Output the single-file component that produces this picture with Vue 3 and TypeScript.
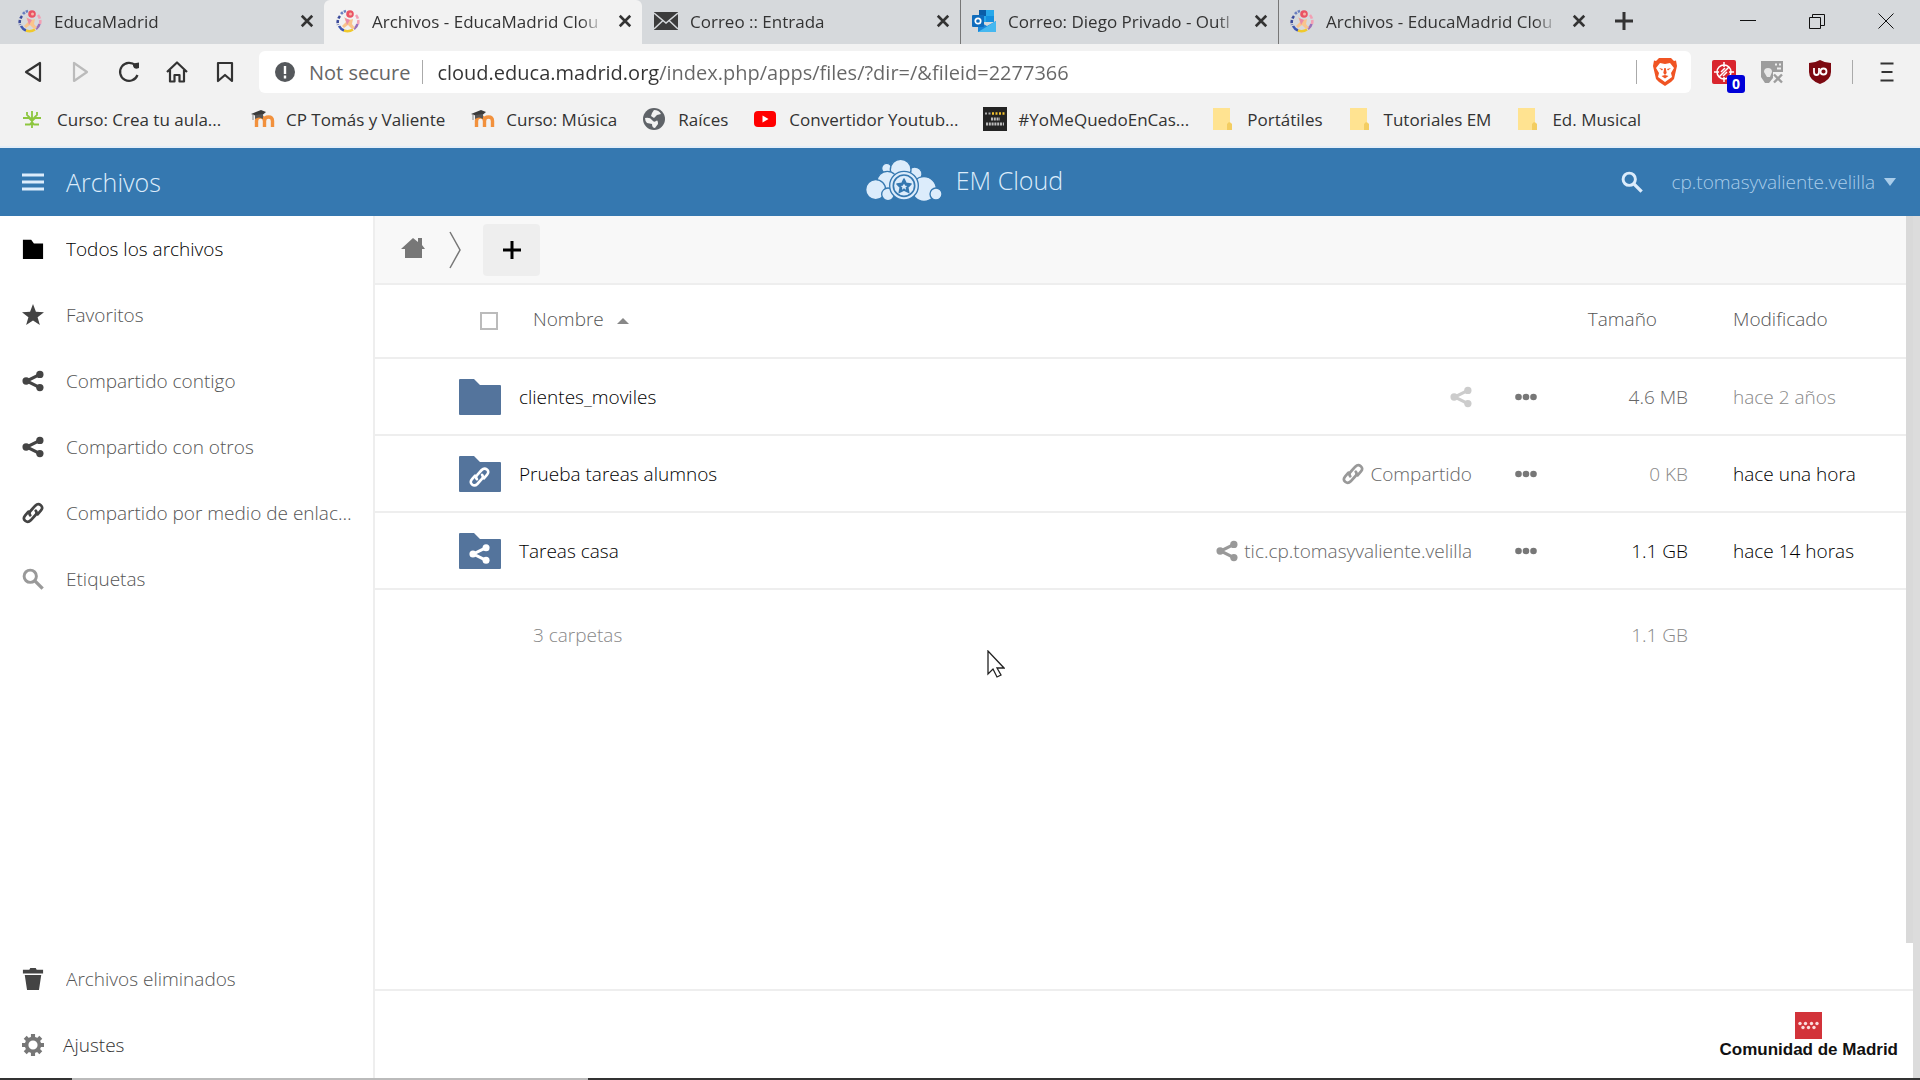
<script setup lang="ts">
import { ref } from 'vue'

interface Tab { title: string; icon: string; active?: boolean }
interface Bookmark { label: string; icon: string; long?: boolean }
interface NavItem { label: string; icon: string; tone?: string }
interface FileRow { name: string; badge?: string; share: string; shareLabel: string; size: string; sizeTone: string; date: string; dateTone: string }

const tabs: Tab[] = [
  { title: 'EducaMadrid', icon: 'educa' },
  { title: 'Archivos - EducaMadrid Clou', icon: 'educa', active: true },
  { title: 'Correo :: Entrada', icon: 'mail' },
  { title: 'Correo: Diego Privado - Outl', icon: 'outlook' },
  { title: 'Archivos - EducaMadrid Clou', icon: 'educa' },
]

const bookmarks: Bookmark[] = [
  { label: 'Curso: Crea tu aula...', icon: 'sprout', long: true },
  { label: 'CP Tomás y Valiente', icon: 'moodle' },
  { label: 'Curso: Música', icon: 'moodle' },
  { label: 'Raíces', icon: 'globe' },
  { label: 'Convertidor Youtub...', icon: 'youtube', long: true },
  { label: '#YoMeQuedoEnCas...', icon: 'poster', long: true },
  { label: 'Portátiles', icon: 'yfolder' },
  { label: 'Tutoriales EM', icon: 'yfolder' },
  { label: 'Ed. Musical', icon: 'yfolder' },
]

const nav: NavItem[] = [
  { label: 'Todos los archivos', icon: 'folder', tone: 'current' },
  { label: 'Favoritos', icon: 'star' },
  { label: 'Compartido contigo', icon: 'share' },
  { label: 'Compartido con otros', icon: 'share' },
  { label: 'Compartido por medio de enlaces', icon: 'link' },
  { label: 'Etiquetas', icon: 'search', tone: 'pale' },
]

const files: FileRow[] = [
  { name: 'clientes_moviles', share: 'share', shareLabel: '', size: '4.6 MB', sizeTone: 't-mid', date: 'hace 2 años', dateTone: 't-soft' },
  { name: 'Prueba tareas alumnos', badge: 'link', share: 'link', shareLabel: 'Compartido', size: '0 KB', sizeTone: 't-soft', date: 'hace una hora', dateTone: 't-dark' },
  { name: 'Tareas casa', badge: 'share', share: 'share', shareLabel: 'tic.cp.tomasyvaliente.velilla', size: '1.1 GB', sizeTone: 't-dark', date: 'hace 14 horas', dateTone: 't-dark' },
]

const url = ref('cloud.educa.madrid.org/index.php/apps/files/?dir=/&fileid=2277366')
const selectAll = ref(false)
</script>

<template>
  <div class="screen">
    <svg class="defs" aria-hidden="true">
      <symbol id="educa" viewBox="0 0 24 24">
        <g fill="none" stroke-width="2.600">
          <path d="M4 7a10 10 0 0 0-2 9" stroke="#3b4a9a" stroke-dasharray="3 1.5" />
          <path d="M5 5a10 10 0 0 1 5-3" stroke="#6a7fc0" stroke-dasharray="2.500 1" />
          <path d="M3 17a10 10 0 0 0 5 4.500" stroke="#3e56b0" />
          <path d="M8 21.500a10 10 0 0 0 9-1" stroke="#f0c92c" />
          <path d="M20 6a10 10 0 0 1 2 9" stroke="#f2a0b4" stroke-dasharray="4 1.500" />
          <path d="M18 20a9 9 0 0 0 3.500-5" stroke="#9a6fb8" />
        </g>
        <circle cx="14" cy="5" r="3.800" fill="#ea5364" />
        <circle cx="14.500" cy="5" r="1.500" fill="#f6b6a8" />
        <path d="M8 8q4 4 9 2l-1 5 3 4-3 1-4-4-4 3-2-2 4-4z" fill="#f9c48c" />
        <path d="M9 9l5 2-3 5z" fill="#e98ba8" />
      </symbol>
      <symbol id="mail" viewBox="0 0 24 24">
        <path d="M0 3h24v18H0z" fill="#3c3c3c" />
        <path d="M0 4l12 10L24 4M0 20l9-8.500M24 20l-9-8.500" fill="none" stroke="#d6d9dc" stroke-width="1.500" />
      </symbol>
      <symbol id="outlook" viewBox="0 0 24 24">
        <path d="M7 1h15v12H7z" fill="#28a8ea" /><path d="M7 1h7v6H7z" fill="#0a5ea8" /><path d="M14 7h8v6h-8z" fill="#1490df" />
        <path d="M6 12l9 5 9-5v11H6z" fill="#1a86d9" /><path d="M6 23l18-11v11z" fill="#45b8f0" />
        <rect y="6" width="12" height="12" rx="1" fill="#0f6cbd" />
        <circle cx="6" cy="12" r="2.700" fill="none" stroke="#fff" stroke-width="1.700" />
      </symbol>
      <symbol id="sprout" viewBox="0 0 24 24">
        <path d="M10 4v17M1 11h6l3 3 3-3h6M5 5v3l5 5 5-5V5M3 17.500h5l2-2.500 2 2.500h5" fill="none" stroke="#8dc63f" stroke-width="1.800" />
      </symbol>
      <symbol id="moodle" viewBox="0 0 24 24">
        <path d="M5.500 20v-6q0-4 4-4t4 4v6M13.500 20v-6q0-4 4-4t4 4v6" fill="none" stroke="#f2913d" stroke-width="3.400" />
        <path d="M0 7l10-4 5 2-6 5z" fill="#3b3b3b" /><path d="M4 8v4q4-3 8 0V7z" fill="#555" /><path d="M2 7v6" stroke="#888" stroke-width="1" />
      </symbol>
      <symbol id="globe" viewBox="0 0 24 24">
        <circle cx="11" cy="12" r="11" fill="#5f6368" />
        <path d="M2 11q5-1 7 2t4 1 2 3l-3 4q-3 0-3-4l-5-1q-2-2-2-5zM11 3q5 0 7 4l-4 1-3 3-3-2 1-3z" fill="#f2f2f2" />
      </symbol>
      <symbol id="youtube" viewBox="0 0 24 24">
        <rect y="4" width="22" height="16" rx="4" fill="#f00" /><path d="M8.500 8.500v7l6-3.500z" fill="#fff" />
      </symbol>
      <symbol id="poster" viewBox="0 0 24 24">
        <path d="M0 0h24v24H0z" fill="#232323" />
        <path d="M2 6.500h7" stroke="#aaa" stroke-width="2" stroke-dasharray="2 1.500" />
        <path d="M9 6.500h13" stroke="#f2c230" stroke-width="2.400" stroke-dasharray="2 1.500" />
        <path d="M8 12h9M3 17h18" stroke="#bbb" stroke-width="3" stroke-dasharray="2 .8" />
      </symbol>
      <symbol id="yfolder" viewBox="0 0 24 24">
        <path d="M1 1h17v14l2 2v6H1z" fill="#ffe391" /><path d="M15 23v-6l2-2 3 2v6z" fill="#f3cd62" />
      </symbol>
      <symbol id="x" viewBox="0 0 24 24"><path d="M5 5l14 14M19 5L5 19" fill="none" stroke="currentColor" stroke-width="3.500" /></symbol>
      <symbol id="plus" viewBox="0 0 24 24"><path d="M12 0v24M0 12h24" fill="none" stroke="currentColor" stroke-width="4" /></symbol>
      <symbol id="folder" viewBox="0 0 24 24"><path d="M1 2h9l3 4h10v17H1z" fill="currentColor" /></symbol>
      <symbol id="star" viewBox="0 0 24 24"><path d="M12 0l3.200 8.500 8.800.4-7 5.500 2.500 8.600L12 18l-7.500 5L7 14.400 0 8.900l8.800-.4z" fill="currentColor" /></symbol>
      <symbol id="share" viewBox="0 0 24 24">
        <path d="M19 5L5 12l14 7" fill="none" stroke="currentColor" stroke-width="3.400" />
        <g fill="currentColor"><circle cx="19.500" cy="4.800" r="4" /><circle cx="4.500" cy="12" r="4" /><circle cx="19.500" cy="19.200" r="4" /></g>
      </symbol>
      <symbol id="link" viewBox="0 0 24 24">
        <g fill="none" stroke="currentColor" stroke-width="3" stroke-linecap="round" stroke-linejoin="round">
          <path d="M9 14.500q-2-2.500.5-5l5-5.500q3-3 6-.5t0 6l-3.500 4" />
          <path d="M15 9.500q2 2.500-.5 5l-5 5.500q-3 3-6 .5t0-6l3.500-4" />
        </g>
      </symbol>
      <symbol id="search" viewBox="0 0 24 24">
        <ellipse cx="9" cy="9" rx="6.700" ry="6.700" fill="none" stroke="currentColor" stroke-width="3.200" />
        <path d="M13.500 13.500l9 9" stroke="currentColor" stroke-width="3.600" />
      </symbol>
      <symbol id="trash" viewBox="0 0 24 24"><path d="M9 0h6l1 2h7v4H1V2h7zM3 7.500h18L18.500 24h-13z" fill="currentColor" /></symbol>
      <symbol id="gear" viewBox="0 0 24 24">
        <circle cx="12" cy="12" r="7" fill="none" stroke="currentColor" stroke-width="4" />
        <path d="M12 0v5M12 19v5M0 12h5M19 12h5M3.500 3.500L7 7M17 17l3.500 3.500M3.500 20.500L7 17M17 7l3.500-3.500" stroke="currentColor" stroke-width="4.500" />
      </symbol>
      <symbol id="house" viewBox="0 0 24 24"><path d="M12 0l5 4V0h4v7l3 4h-3v9H4v-9H0z" fill="currentColor" /></symbol>
    </svg>

    <nav class="tabs" aria-label="Pestañas">
      <div v-for="(t, i) in tabs" :key="i" class="tab" :class="{ active: t.active, divided: i > 1 }">
        <svg class="fav"><use :href="'#' + t.icon" /></svg>
        <span class="title">{{ t.title }}</span>
        <button class="plain" aria-label="Cerrar pestaña"><svg class="i18"><use href="#x" /></svg></button>
      </div>
      <button class="plain newtab" aria-label="Nueva pestaña"><svg class="i18"><use href="#plus" /></svg></button>
      <div class="window">
        <button class="plain" aria-label="Minimizar"><svg viewBox="0 0 16 16"><path d="M0 7.500h16" /></svg></button>
        <button class="plain" aria-label="Restaurar"><svg viewBox="0 0 16 16"><path d="M.5 4.500h11v11H.5zM3.500 4V1.500h12v11H12" /></svg></button>
        <button class="plain" aria-label="Cerrar"><svg viewBox="0 0 16 16"><path d="M.5.5l15 15M15.500.5l-15 15" /></svg></button>
      </div>
    </nav>

    <div class="toolbar">
      <button class="plain tool" aria-label="Atrás"><svg viewBox="0 0 24 24"><path d="M19 3v18L5 12z" /></svg></button>
      <button class="plain tool off" aria-label="Adelante"><svg viewBox="0 0 24 24"><path d="M5 3v18l13-9z" /></svg></button>
      <button class="plain tool" aria-label="Recargar"><svg viewBox="0 0 24 24"><path d="M20.500 15a9 9 0 1 1-2-9.500" /><path d="M16 3.500l6-1V8q-5 2-6-2z" fill="currentColor" stroke="none" /></svg></button>
      <button class="plain tool" aria-label="Inicio"><svg viewBox="0 0 24 24"><path d="M2 12L12 2.500 22 12M5 10v11.500h4.500V15h5v6.500H19V10" /></svg></button>
      <button class="plain tool" aria-label="Marcador"><svg viewBox="0 0 24 24"><path d="M5 3h14v18l-7-6-7 6z" /></svg></button>
      <div class="address">
        <svg class="info" viewBox="0 0 20 20"><circle cx="10" cy="10" r="10" fill="#55585c" /><path d="M10 4v8M10 13.500v3" stroke="#fff" stroke-width="2.400" /></svg>
        <label for="url">Not secure</label>
        <i class="bar"></i>
        <input id="url" v-model="url" type="text" spellcheck="false">
        <i class="bar"></i>
        <button class="plain brave" aria-label="Brave Shields">
          <svg viewBox="0 0 24 28">
            <path d="M6 0h12l3 3 2-.5L24 8l-3 13-3 3-6 4-6-4-3-3L0 8l1-5.500L3 3z" fill="#f05423" />
            <path d="M7 5l5 1 5-1 4 5-3 5 1 4-7 5-7-5 1-4-3-5z" fill="#fff" />
            <path d="M6 10l4 1-1 1.500zM18 10l-4 1 1 1.500zM11.300 10h1.400l1 5-1.700 2-1.700-2zM8.500 18l3.500-1 3.500 1-3.500 2.500z" fill="#f05423" />
          </svg>
        </button>
      </div>
      <div class="exts">
        <button class="plain ext" aria-label="Bloqueador, 0">
          <svg viewBox="0 0 24 24"><rect width="24" height="24" rx="2" fill="#d9252e" /><g fill="none" stroke="#fff" stroke-width="1.500"><circle cx="12" cy="12" r="7" /><path d="M12 2v5M12 17v5M2 12h5M17 12h5M7 17L17 7M9 12l4-4M11 16l4-4" /></g></svg>
          <span class="count">0</span>
        </button>
        <button class="plain ext" aria-label="Extensión desactivada">
          <svg viewBox="0 0 24 24"><path d="M1 1h22v11H13v6l-4 5H5l-4-6z" fill="#9d9d9d" /><path d="M4 12q0-4 4-4t4 4l-2 5H7z" fill="#e8e8e8" /><path d="M15 4.500h2M19 4.500h2M17 8.500h4" stroke="#eee" stroke-width="1.800" /><path d="M14 14.500l8 8M22 14.500l-8 8" stroke="#9d9d9d" stroke-width="2.400" /></svg>
        </button>
        <button class="plain ext" aria-label="uBlock Origin">
          <svg viewBox="0 0 24 24"><path d="M12 0q5 3 11 3v9q0 8-11 12Q1 20 1 12V3q6 0 11-3z" fill="#7c0911" /><path d="M6 8v4q0 3 2.500 3t2.500-3V8" fill="none" stroke="#fff" stroke-width="1.800" /><circle cx="15.500" cy="11.500" r="3" fill="none" stroke="#fff" stroke-width="1.800" /></svg>
        </button>
      </div>
      <i class="bar"></i>
      <button class="plain menu" aria-label="Menú"><svg viewBox="0 0 16 20"><path d="M1.500 1.500h13M2.500 10h11M1.500 18.500h13" fill="none" stroke="#333" stroke-width="2.200" /></svg></button>
    </div>

    <nav class="bookmarks" aria-label="Marcadores">
      <a v-for="b in bookmarks" :key="b.label" href="#" :class="{ long: b.long }"><svg class="i24"><use :href="'#' + b.icon" /></svg>{{ b.label }}</a>
    </nav>

    <header class="apphead">
      <button class="plain appmenu"><svg viewBox="0 0 22 18"><path d="M0 2h22M0 9h22M0 16h22" stroke="currentColor" stroke-width="3" /></svg>Archivos</button>
      <a class="brand" href="#">
        <svg viewBox="0 0 228 126" aria-hidden="true">
          <g fill="#dcecfb" stroke="#3578b0" stroke-width="4">
            <circle cx="62" cy="28" r="15" /><circle cx="146" cy="46" r="22" /><circle cx="104" cy="32" r="31" />
            <circle cx="64" cy="68" r="31" /><circle cx="29" cy="92" r="30" /><circle cx="174" cy="90" r="37" />
            <circle cx="210" cy="105" r="18" /><circle cx="66" cy="106" r="19" /><circle cx="114" cy="80" r="43" />
          </g>
          <circle cx="114" cy="80" r="32" fill="none" stroke="#3578b0" stroke-width="5" />
          <path d="M114 60l6 13 15 2-10 10 3 15-14-7-14 7 3-15-10-10 15-2z" fill="#3578b0" stroke="#3578b0" stroke-width="5" stroke-linejoin="round" />
          <path d="M114 74l4 6 6 1-5 4 1 7-6-4-6 4 1-7-5-4 6-1z" fill="#dcecfb" />
        </svg>
        EM Cloud
      </a>
      <div class="user">
        <button class="plain" aria-label="Buscar"><svg class="i22"><use href="#search" /></svg></button>
        <button class="plain account">cp.tomasyvaliente.velilla<svg viewBox="0 0 12 8"><path d="M0 0h12L6 8z" fill="currentColor" /></svg></button>
      </div>
    </header>

    <main class="app">
      <aside class="side">
        <a v-for="n in nav" :key="n.label" href="#" :class="n.tone"><svg class="i22"><use :href="'#' + n.icon" /></svg><span>{{ n.label }}</span></a>
        <a class="last" href="#"><svg class="i22"><use href="#trash" /></svg><span>Archivos eliminados</span></a>
        <button class="plain settings"><svg class="i22"><use href="#gear" /></svg>Ajustes</button>
      </aside>

      <div class="center">
        <div class="upper">
          <section class="files">
            <div class="crumbs">
              <a href="#" aria-label="Inicio"><svg class="i24"><use href="#house" /></svg></a>
              <svg class="chev" viewBox="0 0 12 38"><path d="M1 1l10 18L1 37" fill="none" stroke="#777" stroke-width="1.500" /></svg>
              <button class="plain add" aria-label="Nuevo"><svg class="i18"><use href="#plus" /></svg></button>
            </div>
            <table>
              <colgroup><col class="c-icon"><col><col class="c-size"><col class="c-date"></colgroup>
              <thead>
                <tr>
                  <th class="check"><input v-model="selectAll" type="checkbox" aria-label="Seleccionar todo"></th>
                  <th class="wide">Nombre<svg class="sort" viewBox="0 0 12 6"><path d="M0 6h12L6 0z" fill="#888" /></svg></th>
                  <th class="hsize">Tamaño</th>
                  <th>Modificado</th>
                </tr>
              </thead>
              <tbody>
                <tr v-for="f in files" :key="f.name">
                  <td class="thumb">
                    <svg viewBox="0 0 42 36"><path d="M0 1q0-1 1-1h14l6 6h20q1 0 1 1v28q0 1-1 1H1q-1 0-1-1z" fill="#54749c" />
                      <use v-if="f.badge" :href="'#' + f.badge" x="10" y="10" width="21" height="22" /></svg>
                  </td>
                  <td>
                    <div class="name">
                      <a href="#">{{ f.name }}</a>
                      <button class="plain sharing" :class="{ faint: !f.shareLabel }" :aria-label="f.shareLabel || 'Compartir'"><svg class="i22"><use :href="'#' + f.share" /></svg>{{ f.shareLabel }}</button>
                      <button class="plain more" aria-label="Más"><svg viewBox="0 0 22 8"><g fill="#777"><circle cx="3.500" cy="4" r="3.300" /><circle cx="11" cy="4" r="3.300" /><circle cx="18.500" cy="4" r="3.300" /></g></svg></button>
                    </div>
                  </td>
                  <td class="size" :class="f.sizeTone">{{ f.size }}</td>
                  <td :class="f.dateTone">{{ f.date }}</td>
                </tr>
              </tbody>
              <tfoot>
                <tr><td></td><td class="wide">3 carpetas</td><td class="size">1.1 GB</td><td></td></tr>
              </tfoot>
            </table>
            <svg class="pointer" viewBox="0 0 18 28"><path d="M1 1v23l5-5 4 8 4-2-4-7h7z" fill="#fff" stroke="#222" stroke-width="1.300" /></svg>
          </section>
          <div class="rail"></div>
        </div>
        <footer>
          <div class="region">
            <svg viewBox="0 0 27 27"><path d="M0 0h27v27H0z" fill="#d2333a" />
              <g fill="#fbdcdc">
                <circle cx="5" cy="11.500" r="1.700" /><circle cx="10.500" cy="11.500" r="1.700" /><circle cx="16.500" cy="11.500" r="1.700" /><circle cx="22" cy="11.500" r="1.700" />
                <circle cx="8" cy="15.500" r="1.700" /><circle cx="13.500" cy="15.500" r="1.700" /><circle cx="19" cy="15.500" r="1.700" />
              </g></svg>
            <strong>Comunidad de Madrid</strong>
          </div>
        </footer>
      </div>
      <div class="outer"></div>
    </main>
    <div class="edge"><i></i><i></i><i></i></div>
  </div>
</template>

<style>
body { margin: 0; background: #fff; }
</style>

<style scoped>
* { box-sizing: border-box; }
.screen { min-height: 100vh; display: flex; flex-direction: column; font-family: "Open Sans", "Noto Sans", sans-serif; color: #333; overflow: hidden; }
.defs { display: none; }
a { color: inherit; text-decoration: none; }
svg { display: block; flex: none; }
.plain { border: 0; padding: 0; margin: 0; background: none; font: inherit; color: inherit; display: flex; align-items: center; justify-content: center; }
.i18 { width: 18px; height: 18px; }
.i22 { width: 22px; height: 22px; }
.i24 { width: 24px; height: 24px; }

.tabs { height: 44px; display: flex; background: #d6d9dc; padding-left: 6px; font-size: 17px; }
.tab { flex: 0 1 318px; min-width: 0; display: flex; align-items: center; gap: 12px; padding: 0 8px 2px 12px; }
.tab.active { background: #f2f2f2; border-radius: 6px 6px 0 0; }
.tab.divided + .tab.divided { border-left: 1px solid #777; padding-left: 11px; }
.fav { width: 24px; height: 24px; }
.title { flex: 1; overflow: hidden; white-space: nowrap; mask-image: linear-gradient(90deg, #000 90%, transparent); }
.newtab { width: 56px; padding-bottom: 2px; color: #333; }
.window { margin-left: auto; display: flex; padding-bottom: 2px; }
.window button { width: 69px; }
.window svg { width: 16px; height: 16px; fill: none; stroke: #111; stroke-width: 1; }

.toolbar { height: 56px; display: flex; align-items: center; padding: 0 9px; background: #f2f2f2; }
.tool { width: 48px; height: 48px; color: #333; }
.tool svg { width: 24px; height: 24px; fill: none; stroke: currentColor; stroke-width: 2.200; stroke-linejoin: round; }
.off { color: #bbb; }
.address { flex: 1; height: 42px; margin-left: 10px; display: flex; align-items: center; background: #fff; border-radius: 6px; padding: 0 14px 0 16px; font-size: 20px; color: #666; }
.info { width: 20px; height: 20px; margin-right: 14px; }
.bar { width: 1px; height: 24px; background: #aaa; margin: 0 14px 0 12px; }
.address input { flex: 1; min-width: 0; border: 0; padding: 0; outline: 0; font: inherit; color: transparent; background: linear-gradient(90deg, #333 222px, #666 222px) text; }
.brave { padding-left: 2px; }
.brave svg { width: 24px; height: 28px; }
.exts { display: flex; margin-left: 9px; }
.ext { width: 48px; height: 42px; position: relative; }
.ext svg { width: 24px; height: 24px; }
.count { position: absolute; right: 3px; bottom: 0; width: 18px; height: 18px; border-radius: 3px; background: #0000d8; color: #fff; font-size: 14px; line-height: 18px; font-weight: 700; }
.toolbar > .bar { margin: 0 0 0 8px; }
.menu { width: 48px; margin: 0 0 0 10px; }
.menu svg { width: 16px; height: 20px; }

.bookmarks { height: 48px; display: flex; align-items: center; gap: 26px; padding: 0 22px 8px; background: #f2f2f2; border-bottom: 2px solid #e4eef8; font-size: 17px; }
.bookmarks a { display: flex; align-items: center; gap: 11px; white-space: nowrap; }
.bookmarks .long { width: 203px; }

.apphead { height: 68px; display: grid; grid-template-columns: 1fr auto 1fr; align-items: center; padding: 0 24px 0 22px; background: #3578b0; color: #dcecfb; font-size: 25px; font-weight: 300; }
.appmenu { justify-content: flex-start; gap: 22px; }
.appmenu svg { width: 22px; height: 18px; }
.brand { display: flex; align-items: center; gap: 14px; padding: 0 0 4px 11px; }
.brand svg { width: 76px; height: 42px; }
.user { display: flex; justify-content: flex-end; gap: 28px; }
.account { font-size: 19px; gap: 9px; color: #a9cdea; }
.account svg { width: 12px; height: 8px; }

.app { flex: 1; display: flex; font-size: 19px; font-weight: 300; }
.side { width: 375px; flex: none; display: flex; flex-direction: column; border-right: 2px solid #eee; color: #555; }
.side a, .settings { height: 66px; flex: none; display: flex; align-items: center; justify-content: flex-start; gap: 22px; padding: 0 16px 0 22px; }
.side span { overflow: hidden; text-overflow: ellipsis; white-space: nowrap; }
.side svg { color: #444; }
.side .current, .side .current svg { color: #000; }
.side .pale svg { color: #999; }
.side .last { margin-top: auto; }
.side .settings { color: #333; gap: 19px; }
.side .settings svg { color: #777; }

.center { flex: 1; min-width: 0; display: flex; flex-direction: column; }
.upper { flex: 1; display: flex; }
.files { flex: 1; min-width: 0; position: relative; }
.rail { width: 7px; height: 94%; background: #d9d9d9; }
.outer { width: 7px; background: #dcdcdc; }
.crumbs { height: 69px; display: flex; align-items: center; padding-left: 26px; background: #f8f8f8; border-bottom: 2px solid #eee; color: #777; }
.chev { width: 12px; height: 38px; margin: 0 22px 0 24px; }
.add { width: 57px; height: 52px; background: #eee; border-radius: 4px; color: #000; }
table { width: 100%; table-layout: fixed; border-collapse: collapse; }
.c-icon { width: 134px; }
.c-size { width: 173px; }
.c-date { width: 173px; }
th, td { padding: 0; height: 77px; text-align: left; font-weight: 300; border-bottom: 2px solid #eee; }
th { height: 73px; padding-bottom: 4px; color: #555; }
.check { padding: 0 0 0 105px; }
.check input { appearance: none; display: block; width: 18px; height: 18px; margin: 0; border: 2px solid #bbb; background: #fff; }
.wide { padding-left: 24px; }
.sort { display: inline-block; width: 12px; height: 6px; margin: 0 0 2px 13px; }
.hsize { text-align: right; padding-right: 76px; }
.size { text-align: right; padding-right: 45px; }
.thumb { padding-left: 84px; color: #fff; }
.thumb svg { width: 42px; height: 36px; }
.name { display: flex; align-items: center; padding: 0 23px 0 10px; color: #000; }
.name a { flex: 1; }
.sharing { gap: 6px; color: #666; }
.sharing svg { color: #999; }
.faint { gap: 0; }
.faint svg { color: #ccc; }
.more { margin-left: 43px; }
.more svg { width: 22px; height: 8px; }
.t-dark { color: #000; }
.t-mid { color: #666; }
.t-soft { color: #888; }
tfoot td { height: 90px; border: 0; color: #888; }
.pointer { position: absolute; left: 40%; top: 434px; width: 18px; height: 28px; }
footer { height: 89px; border-top: 2px solid #eee; display: flex; justify-content: flex-end; padding: 21px 15px 0 0; }
.region { display: flex; flex-direction: column; align-items: center; color: #111; font: 900 17px/22px "Liberation Sans", Arial, sans-serif; }
.region svg { width: 27px; height: 27px; }
.edge { height: 2px; display: flex; }
.edge i { flex: 1332; background: #333; }
.edge i:first-child { flex: 72; }
.edge i:nth-child(2) { flex: 516; background: #bbb; }
</style>
